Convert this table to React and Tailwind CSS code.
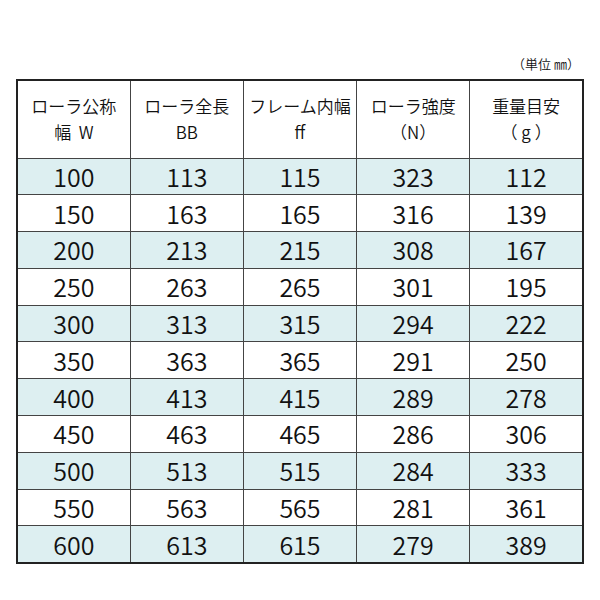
import React from 'react';

const rows = [
  ['100', '113', '115', '323', '112'],
  ['150', '163', '165', '316', '139'],
  ['200', '213', '215', '308', '167'],
  ['250', '263', '265', '301', '195'],
  ['300', '313', '315', '294', '222'],
  ['350', '363', '365', '291', '250'],
  ['400', '413', '415', '289', '278'],
  ['450', '463', '465', '286', '306'],
  ['500', '513', '515', '284', '333'],
  ['550', '563', '565', '281', '361'],
  ['600', '613', '615', '279', '389'],
];

const headers = [
  ['ローラ公称', '幅\u00a0\u00a0W'],
  ['ローラ全長', 'BB'],
  ['フレーム内幅', 'ff'],
  ['ローラ強度', '（N）'],
  ['重量目安', '（ g ）'],
];

export default function App() {
  return (
    <div
      className="w-[600px] h-[600px] bg-white text-[#111] pl-[16px] pt-[56px] font-[350]"
      style={{ fontFamily: '"Noto Sans CJK JP", "Noto Sans", sans-serif' }}
    >
      <div className="w-[568px] flex justify-end pr-[4px] text-[13px] leading-[16px] h-[23px]">
        （単位 ㎜）
      </div>
      <table className="w-[568px] border-collapse border-2 border-[#222] table-fixed">
        <thead>
          <tr className="h-[78px]">
            {headers.map((h, i) => (
              <th
                key={i}
                className="border border-[#444] font-[350] text-[17px] leading-[26px] text-center align-middle"
              >
                <div>{h[0]}</div>
                <div>{h[1]}</div>
              </th>
            ))}
          </tr>
        </thead>
        <tbody>
          {rows.map((r, i) => (
            <tr key={i} className={`h-[36.8px] ${i % 2 === 0 ? 'bg-[#ddeff1]' : 'bg-white'}`}>
              {r.map((c, j) => (
                <td
                  key={j}
                  className="border border-[#444] text-center text-[25px] leading-none p-0"
                >
                  {c}
                </td>
              ))}
            </tr>
          ))}
        </tbody>
      </table>
    </div>
  );
}
